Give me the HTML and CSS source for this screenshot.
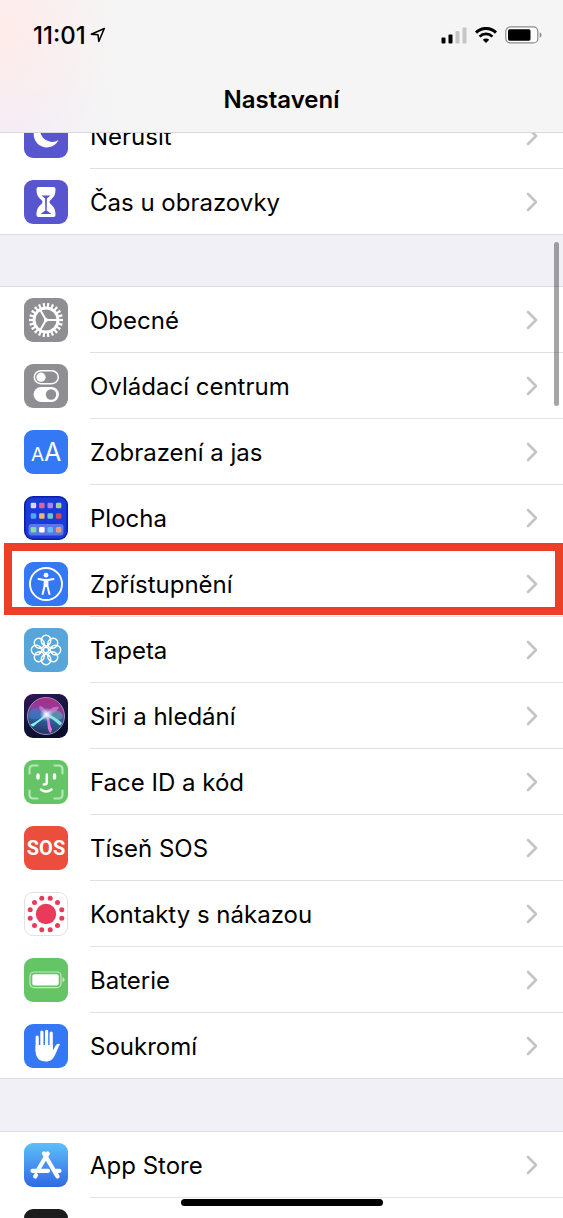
FILE: index.html
```html
<!DOCTYPE html>
<html lang="cs">
<head>
    <meta charset="UTF-8">
    <meta name="viewport" content="width=device-width, initial-scale=1.0">
    <title>Nastavení</title>
    <link rel="stylesheet" href="styles.css">
</head>
<body>

<!-- Shared shapes -->
<svg class="defs" width="0" height="0" aria-hidden="true">
    <symbol id="chevron" viewBox="0 0 12 20">
        <path d="M2 2 L10 10 L2 18" fill="none" stroke="#c4c4c6" stroke-width="2.6" stroke-linecap="round" stroke-linejoin="round"/>
    </symbol>
</svg>

<div class="phone">
    <header class="header">
        <div class="status-bar">
            <div class="status-left">
                <span class="time">11:01</span>
                <svg width="16" height="16" viewBox="0 0 16 16" aria-hidden="true">
                    <path d="M14.3 1.5 L1.3 7.2 L8 7.8 L8.8 14.4 Z" fill="none" stroke="#000" stroke-width="1.5" stroke-linejoin="round"/>
                </svg>
            </div>
            <div class="status-right">
                <svg width="26" height="17" viewBox="0 0 26 17" aria-hidden="true">
                    <rect x="0.5" y="10.5" width="4" height="6" rx="1"/>
                    <rect x="7.5" y="7.5" width="4" height="9" rx="1"/>
                    <rect x="14.5" y="4" width="4" height="12.5" rx="1" fill="#c6c6c6"/>
                    <rect x="21.5" y="0.5" width="4" height="16" rx="1" fill="#c6c6c6"/>
                </svg>
                <svg width="22" height="16" viewBox="0 0 22 16" aria-hidden="true">
                    <path d="M1 5.6 A14 14 0 0 1 21 5.6" fill="none" stroke="#000" stroke-width="3"/>
                    <path d="M4.6 9.6 A9 9 0 0 1 17.4 9.6" fill="none" stroke="#000" stroke-width="2.7"/>
                    <path d="M11 16 L7.8 12.8 A4.6 4.6 0 0 1 14.2 12.8 Z"/>
                </svg>
                <svg width="37" height="18" viewBox="0 0 37 18" aria-hidden="true">
                    <rect x="0.8" y="0.9" width="32" height="16" rx="4.5" fill="#fcfcfc" stroke="#8c8c8c" stroke-width="1.2"/>
                    <rect x="3" y="3.3" width="22.5" height="11.4" rx="1.6"/>
                    <path d="M34.6 6.2 Q36.6 7.2 36.6 9 Q36.6 10.8 34.6 11.8 Z" fill="#8c8c8c"/>
                </svg>
            </div>
        </div>
        <h1>Nastavení</h1>
    </header>

    <main class="settings">
        <ul class="group">
            <li class="row">
                <a href="#">
                    <svg class="icon" viewBox="0 0 44 44" aria-hidden="true">
                        <rect width="44" height="44" rx="9" fill="#5856ce"/>
                        <path d="M19 8 A13 13 0 1 0 34.5 26 A12 12 0 0 1 19 8 Z" fill="#fff"/>
                    </svg>
                    <span class="label">Nerušit</span>
                    <svg class="chevron" aria-hidden="true"><use href="#chevron"/></svg>
                </a>
            </li>
            <li class="row">
                <a href="#">
                    <svg class="icon" viewBox="0 0 44 44" aria-hidden="true">
                        <rect width="44" height="44" rx="9" fill="#5856ce"/>
                        <path d="M14.5 7 H29.5 Q31.5 7 31.5 9 C31.5 15 30 17 26.5 20 Q24.5 22 26.5 24 C30 27 31.5 29 31.5 35 Q31.5 37 29.5 37 H14.5 Q12.5 37 12.5 35 C12.5 29 14 27 17.5 24 Q19.5 22 17.5 20 C14 17 12.5 15 12.5 9 Q12.5 7 14.5 7 Z" fill="#fff"/>
                        <path d="M17.5 15.5 H26.5 L22.9 18.5 L22.7 30.5 L27.5 34 H16.5 L21.3 30.5 L21.1 18.5 Z" fill="#5856ce"/>
                    </svg>
                    <span class="label">Čas u obrazovky</span>
                    <svg class="chevron" aria-hidden="true"><use href="#chevron"/></svg>
                </a>
            </li>
        </ul>

        <ul class="group">
            <li class="row">
                <a href="#">
                    <svg class="icon" viewBox="0 0 44 44" aria-hidden="true">
                        <rect width="44" height="44" rx="9" fill="#8e8e93"/>
                        <g fill="none" stroke="#fff">
                            <circle cx="22" cy="22" r="12" stroke-width="3"/>
                            <circle cx="22" cy="22" r="15" stroke-width="4" pathLength="44" stroke-dasharray="1 1" stroke-dashoffset="0.5"/>
                            <path d="M34 22 H22 L16 11.6 M22 22 L16 32.4" stroke-width="2"/>
                        </g>
                        <circle cx="22" cy="22" r="2" fill="#fff"/>
                    </svg>
                    <span class="label">Obecné</span>
                    <svg class="chevron" aria-hidden="true"><use href="#chevron"/></svg>
                </a>
            </li>
            <li class="row">
                <a href="#">
                    <svg class="icon" viewBox="0 0 44 44" aria-hidden="true">
                        <rect width="44" height="44" rx="9" fill="#8e8e93"/>
                        <rect x="10.3" y="6.7" width="24" height="13" rx="6.5" fill="none" stroke="#fff" stroke-width="1.5"/>
                        <circle cx="17" cy="13.2" r="4.6" fill="#fff"/>
                        <rect x="9.6" y="23" width="25.4" height="15" rx="7.5" fill="#fff"/>
                        <circle cx="27" cy="30.5" r="5.2" fill="#8e8e93"/>
                    </svg>
                    <span class="label">Ovládací centrum</span>
                    <svg class="chevron" aria-hidden="true"><use href="#chevron"/></svg>
                </a>
            </li>
            <li class="row">
                <a href="#">
                    <svg class="icon" viewBox="0 0 44 44" aria-hidden="true">
                        <rect width="44" height="44" rx="9" fill="#3478f6"/>
                        <text class="icon-text" x="7" y="31" font-size="19">A</text>
                        <text class="icon-text" x="20" y="31" font-size="25">A</text>
                    </svg>
                    <span class="label">Zobrazení a jas</span>
                    <svg class="chevron" aria-hidden="true"><use href="#chevron"/></svg>
                </a>
            </li>
            <li class="row">
                <a href="#">
                    <svg class="icon" viewBox="0 0 44 44" aria-hidden="true">
                        <rect width="44" height="44" rx="9" fill="#0c1fa8"/>
                        <rect x="1.5" y="1.5" width="41" height="41" rx="7.5" fill="#1b3bd8"/>
                        <rect x="4.5" y="28" width="35" height="11.5" rx="3" fill="#5d78e4"/>
                        <rect x="6.7" y="6.7" width="5.5" height="5.5" rx="1.3" fill="#d3d9ee"/>
                        <rect x="15.1" y="6.7" width="5.5" height="5.5" rx="1.3" fill="#e0638c"/>
                        <rect x="23.5" y="6.7" width="5.5" height="5.5" rx="1.3" fill="#a884f7"/>
                        <rect x="31.9" y="6.7" width="5.5" height="5.5" rx="1.3" fill="#acd08c"/>
                        <rect x="6.7" y="17.3" width="5.5" height="5.5" rx="1.3" fill="#55a5f5"/>
                        <rect x="15.1" y="17.3" width="5.5" height="5.5" rx="1.3" fill="#f3b866"/>
                        <rect x="23.5" y="17.3" width="5.5" height="5.5" rx="1.3" fill="#6cc9cf"/>
                        <rect x="31.9" y="17.3" width="5.5" height="5.5" rx="1.3" fill="#d44c5c"/>
                        <rect x="6.7" y="31" width="5.5" height="5.5" rx="1.3" fill="#82dfa0"/>
                        <rect x="15.1" y="31" width="5.5" height="5.5" rx="1.3" fill="#fff"/>
                        <rect x="23.5" y="31" width="5.5" height="5.5" rx="1.3" fill="#63bdf8"/>
                        <rect x="31.9" y="31" width="5.5" height="5.5" rx="1.3" fill="#dfa081"/>
                    </svg>
                    <span class="label">Plocha</span>
                    <svg class="chevron" aria-hidden="true"><use href="#chevron"/></svg>
                </a>
            </li>
            <li class="row highlighted">
                <a href="#">
                    <svg class="icon" viewBox="0 0 44 44" aria-hidden="true">
                        <rect width="44" height="44" rx="9" fill="#3478f6"/>
                        <circle cx="22" cy="22" r="16" fill="none" stroke="#fff" stroke-width="1.9"/>
                        <circle cx="22" cy="13.2" r="2.4" fill="#fff"/>
                        <path d="M14.5 17 L20 18 H24 L29.5 17 M22 18 V24 M20.6 18.5 V24 L18.6 32 M23.4 18.5 V24 L25.4 32" fill="none" stroke="#fff" stroke-width="2" stroke-linecap="round" stroke-linejoin="round"/>
                    </svg>
                    <span class="label">Zpřístupnění</span>
                    <svg class="chevron" aria-hidden="true"><use href="#chevron"/></svg>
                </a>
            </li>
            <li class="row">
                <a href="#">
                    <svg class="icon" viewBox="0 0 44 44" aria-hidden="true">
                        <rect width="44" height="44" rx="9" fill="#57a5d9"/>
                        <g fill="none" stroke="#fff" stroke-width="1.4">
                            <ellipse cx="22" cy="12.5" rx="4.8" ry="5.2"/>
                            <ellipse cx="22" cy="12.5" rx="4.8" ry="5.2" transform="rotate(45 22 22)"/>
                            <ellipse cx="22" cy="12.5" rx="4.8" ry="5.2" transform="rotate(90 22 22)"/>
                            <ellipse cx="22" cy="12.5" rx="4.8" ry="5.2" transform="rotate(135 22 22)"/>
                            <ellipse cx="22" cy="12.5" rx="4.8" ry="5.2" transform="rotate(180 22 22)"/>
                            <ellipse cx="22" cy="12.5" rx="4.8" ry="5.2" transform="rotate(225 22 22)"/>
                            <ellipse cx="22" cy="12.5" rx="4.8" ry="5.2" transform="rotate(270 22 22)"/>
                            <ellipse cx="22" cy="12.5" rx="4.8" ry="5.2" transform="rotate(315 22 22)"/>
                            <circle cx="22" cy="22" r="2.6"/>
                            <path d="M22 19.4 L19 15.5 M22 19.4 L25 15.5 M22 24.6 L19 28.5 M22 24.6 L25 28.5 M19.4 22 L15.5 19 M19.4 22 L15.5 25 M24.6 22 L28.5 19 M24.6 22 L28.5 25"/>
                        </g>
                    </svg>
                    <span class="label">Tapeta</span>
                    <svg class="chevron" aria-hidden="true"><use href="#chevron"/></svg>
                </a>
            </li>
            <li class="row">
                <a href="#">
                    <svg class="icon" viewBox="0 0 44 44" aria-hidden="true">
                        <defs>
                            <linearGradient id="siri-back" x1="0" y1="0" x2="0.4" y2="1">
                                <stop offset="0" stop-color="#36125c"/>
                                <stop offset="0.5" stop-color="#16173f"/>
                                <stop offset="1" stop-color="#0b0f2c"/>
                            </linearGradient>
                            <linearGradient id="siri-orb" x1="0.6" y1="0" x2="0.4" y2="1">
                                <stop offset="0" stop-color="#b02a84"/>
                                <stop offset="0.35" stop-color="#8a3f9c"/>
                                <stop offset="0.6" stop-color="#2f5f9c"/>
                                <stop offset="1" stop-color="#25325f"/>
                            </linearGradient>
                            <radialGradient id="siri-glow">
                                <stop offset="0" stop-color="#fff"/>
                                <stop offset="0.3" stop-color="#e9f4ff" stop-opacity="0.8"/>
                                <stop offset="1" stop-color="#a9c8ff" stop-opacity="0"/>
                            </radialGradient>
                        </defs>
                        <rect width="44" height="44" rx="9" fill="url(#siri-back)"/>
                        <circle cx="22" cy="22" r="18.5" fill="url(#siri-orb)" stroke="#9a8fb4" stroke-width="1"/>
                        <path d="M22 20 C10 10 7 15 5 21 C5 27 14 26 22 22 Z" fill="#3f7fd0" opacity="0.6"/>
                        <path d="M22 20 C30 14 36 15 39 22 C38 28 30 26 22 22 Z" fill="#4cb7b4" opacity="0.6"/>
                        <path d="M22 20 C15 17 14 13 16 12 C20 13 22 16 23 20 C25 15 29 12 35 13 C33 18 28 19 23 21 Z" fill="#d27fd0" opacity="0.75"/>
                        <path d="M22 19 C17 25 12 28 6.5 30.5 Q8 33 9.5 32.5 C14 28 20 25 24 21 Z" fill="#7ff5ea"/>
                        <path d="M22 20 C28 21 34 25 38 29 Q37 31 36 31.5 C31 27 27 24 22 22 Z" fill="#86e8dc"/>
                        <path d="M21 20 C25 28 22 33 26 39 Q28 38 28 35 C25 30 27 26 23 19 Z" fill="#dc7ad9"/>
                        <circle cx="22.5" cy="20.5" r="7" fill="url(#siri-glow)"/>
                    </svg>
                    <span class="label">Siri a hledání</span>
                    <svg class="chevron" aria-hidden="true"><use href="#chevron"/></svg>
                </a>
            </li>
            <li class="row">
                <a href="#">
                    <svg class="icon" viewBox="0 0 44 44" aria-hidden="true">
                        <rect width="44" height="44" rx="9" fill="#65c466"/>
                        <g fill="none" stroke-linecap="round">
                            <path d="M5.5 13.5 V9.5 Q5.5 5.5 9.5 5.5 H13.5 M30.5 5.5 H34.5 Q38.5 5.5 38.5 9.5 V13.5 M38.5 30.5 V34.5 Q38.5 38.5 34.5 38.5 H30.5 M13.5 38.5 H9.5 Q5.5 38.5 5.5 34.5 V30.5" stroke="#b8e5b8" stroke-width="2.2"/>
                            <path d="M14 15 V18 M30.5 15 V18" stroke="#fff" stroke-width="3.4"/>
                            <path d="M22.8 14.5 V22.5 Q22.8 24.5 19.8 24.5 M17 29.5 Q22 33.5 27.5 29.5" stroke="#fff" stroke-width="2.5"/>
                        </g>
                    </svg>
                    <span class="label">Face ID a kód</span>
                    <svg class="chevron" aria-hidden="true"><use href="#chevron"/></svg>
                </a>
            </li>
            <li class="row">
                <a href="#">
                    <svg class="icon" viewBox="0 0 44 44" aria-hidden="true">
                        <rect width="44" height="44" rx="9" fill="#eb4e3d"/>
                        <text class="icon-sos" x="22" y="29" text-anchor="middle">SOS</text>
                    </svg>
                    <span class="label">Tíseň SOS</span>
                    <svg class="chevron" aria-hidden="true"><use href="#chevron"/></svg>
                </a>
            </li>
            <li class="row">
                <a href="#">
                    <svg class="icon" viewBox="0 0 44 44" aria-hidden="true">
                        <rect x="0.5" y="0.5" width="43" height="43" rx="8.5" fill="#fff" stroke="#e2e2e4"/>
                        <g fill="#ea3a5b">
                            <circle cx="22" cy="22" r="10.2"/>
                            <circle cx="26.2" cy="6.2" r="2.5"/>
                            <circle cx="33.5" cy="10.5" r="2.5"/>
                            <circle cx="37.8" cy="17.8" r="2.5"/>
                            <circle cx="37.8" cy="26.2" r="2.5"/>
                            <circle cx="33.5" cy="33.5" r="2.5"/>
                            <circle cx="26.2" cy="37.8" r="2.5"/>
                            <circle cx="17.8" cy="37.8" r="2.5"/>
                            <circle cx="10.5" cy="33.5" r="2.5"/>
                            <circle cx="6.2" cy="26.2" r="2.5"/>
                            <circle cx="6.2" cy="17.8" r="2.5"/>
                            <circle cx="10.5" cy="10.5" r="2.5"/>
                            <circle cx="17.8" cy="6.2" r="2.5"/>
                        </g>
                    </svg>
                    <span class="label">Kontakty s nákazou</span>
                    <svg class="chevron" aria-hidden="true"><use href="#chevron"/></svg>
                </a>
            </li>
            <li class="row">
                <a href="#">
                    <svg class="icon" viewBox="0 0 44 44" aria-hidden="true">
                        <rect width="44" height="44" rx="9" fill="#65c466"/>
                        <rect x="6" y="14" width="31" height="15.6" rx="4" fill="none" stroke="#c4eac4" stroke-width="1.2"/>
                        <rect x="8.3" y="16.2" width="26.4" height="11.2" rx="2" fill="#fff"/>
                        <path d="M38.6 19 Q40.6 20 40.6 21.8 Q40.6 23.6 38.6 24.6 Z" fill="#c4eac4"/>
                    </svg>
                    <span class="label">Baterie</span>
                    <svg class="chevron" aria-hidden="true"><use href="#chevron"/></svg>
                </a>
            </li>
            <li class="row">
                <a href="#">
                    <svg class="icon" viewBox="0 0 44 44" aria-hidden="true">
                        <rect width="44" height="44" rx="9" fill="#3478f6"/>
                        <path d="M13.2 13 V27 M17.9 8 V24 M22.6 7.3 V24 M27.2 9 V25" fill="none" stroke="#fff" stroke-width="3.2" stroke-linecap="round"/>
                        <path d="M11.6 21 H28.8 V26.5 C30.5 24.5 31.3 20.5 33.5 20 Q35.5 19.5 36 20.6 C34 23.5 33.2 27 31 31 C29 35.5 26 37.5 22 37.5 C14.5 37.5 11.6 33 11.6 26.5 Z" fill="#fff"/>
                    </svg>
                    <span class="label">Soukromí</span>
                    <svg class="chevron" aria-hidden="true"><use href="#chevron"/></svg>
                </a>
            </li>
        </ul>

        <ul class="group">
            <li class="row">
                <a href="#">
                    <svg class="icon" viewBox="0 0 44 44" aria-hidden="true">
                        <defs>
                            <linearGradient id="store" x1="0" y1="0" x2="0" y2="1">
                                <stop offset="0" stop-color="#5dbff8"/>
                                <stop offset="1" stop-color="#3069e6"/>
                            </linearGradient>
                        </defs>
                        <rect width="44" height="44" rx="9" fill="url(#store)"/>
                        <path d="M23.8 10.5 L14.5 26 M12 32 L11.2 33.5 M20 10.5 L33.5 33.5 M8.5 27.8 H24 M31 27.8 H35.5" fill="none" stroke="#fff" stroke-width="4.2" stroke-linecap="round"/>
                    </svg>
                    <span class="label">App Store</span>
                    <svg class="chevron" aria-hidden="true"><use href="#chevron"/></svg>
                </a>
            </li>
            <li class="row">
                <a href="#">
                    <svg class="icon" viewBox="0 0 44 44" aria-hidden="true">
                        <rect width="44" height="44" rx="9" fill="#1c1c1e"/>
                    </svg>
                    <span class="label"></span>
                    <svg class="chevron" aria-hidden="true"><use href="#chevron"/></svg>
                </a>
            </li>
        </ul>
    </main>

    <div class="scroll-thumb"></div>
    <div class="home-indicator"></div>
</div>

</body>
</html>
```
FILE: styles.css
```css
* {
    box-sizing: border-box;
}

body {
    margin: 0;
    font-family: Inter, "Liberation Sans", sans-serif;
    color: #000;
    background: #f1f0f6;
}

.defs {
    position: absolute;
}

.phone {
    position: relative;
    height: 100vh;
    overflow: hidden;
}

/* Header stays above the scrolled list */
.header {
    position: absolute;
    top: 0;
    left: 0;
    right: 0;
    z-index: 2;
    height: 133px;
    border-bottom: 1px solid #d9d9dc;
    background:
        radial-gradient(circle at 0 30px, #ffebea, rgba(255, 235, 234, 0) 120px),
        radial-gradient(circle at 0 130px, #f3ecf6, rgba(243, 236, 246, 0) 120px),
        #f5f5f5;
}

.status-bar {
    display: flex;
    justify-content: space-between;
    align-items: center;
    height: 70px;
    padding: 0 21px 0 33px;
}

.status-left,
.status-right {
    display: flex;
    align-items: center;
    gap: 8px;
}

.status-left {
    gap: 4px;
}

.time {
    font-size: 24px;
    font-weight: 500;
}

h1 {
    margin: 0;
    font-size: 24px;
    font-weight: 600;
    line-height: 60px;
    text-align: center;
}

.settings {
    padding-top: 102px;
}

.group {
    list-style: none;
    margin: 0 0 52px;
    padding: 0;
    background: #fff;
    border-top: 1px solid #dddce2;
}

.row {
    position: relative;
    height: 66px;
}

.row a {
    display: flex;
    align-items: center;
    height: 100%;
    padding-left: 24px;
    color: inherit;
    text-decoration: none;
}

.row:last-child {
    border-bottom: 1px solid #dddce2;
}

.group:first-child {
    margin-bottom: 51px;
}

.icon {
    flex: none;
    width: 44px;
    height: 44px;
    margin-right: 22px;
}

.label {
    flex: 1;
    font-size: 24px;
    line-height: 68px;
    height: 66px;
    border-bottom: 1px solid #e2e2e4;
}

.chevron {
    flex: none;
    width: 37px;
    height: 66px;
    padding: 23px 25px 22px 0;
    border-bottom: 1px solid #e2e2e4;
}

.row:last-child .label,
.row:last-child .chevron {
    border-bottom-color: transparent;
}

.highlighted::after {
    content: "";
    position: absolute;
    inset: -8px 0 2px 4px;
    border: 8px solid #eb4026;
    pointer-events: none;
}

.icon-text {
    fill: #fff;
}

.icon-sos {
    fill: #fff;
    font-family: Roboto, "Liberation Sans", sans-serif;
    font-size: 20px;
    font-weight: 700;
}

.scroll-thumb {
    position: absolute;
    top: 242px;
    right: 4px;
    width: 5px;
    height: 164px;
    border-radius: 3px;
    background: rgba(0, 0, 0, 0.35);
}

.home-indicator {
    position: absolute;
    bottom: 12px;
    left: 50%;
    width: 202px;
    height: 7px;
    margin-left: -101px;
    border-radius: 4px;
    background: #000;
}
```
